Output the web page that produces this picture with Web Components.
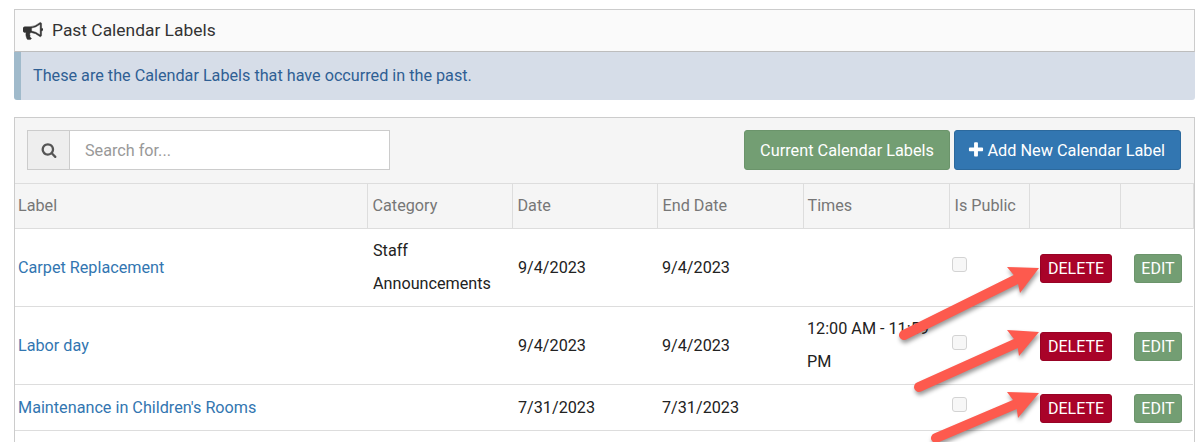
<!DOCTYPE html>
<html>
<head>
<meta charset="utf-8">
<title>Past Calendar Labels</title>
<style>
  html, body { margin: 0; height: 442px; overflow: hidden; background: #fff; }
  body { font-family: Roboto, "Liberation Sans", sans-serif; font-size: 16.2px; color: #222; }
</style>
</head>
<body>
<notice-panel title="Past Calendar Labels">These are the Calendar Labels that have occurred in the past.</notice-panel>
<labels-panel></labels-panel>
<arrow-overlay></arrow-overlay>

<script>
const BULLHORN = "M1664 640q53 0 90.5 37.5t37.5 90.5-37.5 90.5-90.5 37.5v384q0 52-38 90t-90 38q-417-347-812-380-58 19-91 66t-31 100.5 40 92.5q-20 33-23 65.5t6 58 33.5 55 48 50 61.5 50.5q-29 58-111.5 83t-168.5 11.5-132-55.5q-7-23-29.5-87.5t-32-94.5-23-89-15-101 3.5-98.5 22-110.5h-122q-66 0-113-47t-47-113v-192q0-66 47-113t113-47h480q435 0 896-384 52 0 90 38t38 90v384zm-128 604v-954q-394 302-768 343v270q377 42 768 341z";
const SEARCH = "M1216 832q0-185-131.5-316.5t-316.5-131.5-316.5 131.5-131.5 316.5 131.5 316.5 316.5 131.5 316.5-131.5 131.5-316.5zm512 832q0 52-38 90t-90 38q-54 0-90-38l-343-342q-179 124-399 124-143 0-273.5-55.5t-225-150-150-225-55.5-273.5 55.5-273.5 150-225 225-150 273.5-55.5 273.5 55.5 225 150 150 225 55.5 273.5q0 220-124 399l343 343q37 37 37 90z";
const PLUS = "M1600 736v192q0 40-28 68t-68 28h-416v416q0 40-28 68t-68 28h-192q-40 0-68-28t-28-68v-416h-416q-40 0-68-28t-28-68v-192q0-40 28-68t68-28h416v-416q0-40 28-68t68-28h192q40 0 68 28t28 68v416h416q40 0 68 28t28 68z";

// Heading plus the blue info strip
class NoticePanel extends HTMLElement {
  connectedCallback() {
    let title = this.getAttribute("title");
    this.removeAttribute("title");
    this._root = this.attachShadow({ mode: "open" });
    this._root.innerHTML = `
      <style>
        :host { display: block; margin: 9px 9px 0 14px; }
        .head {
          display: flex;
          align-items: center;
          gap: 9px;
          height: 41px;
          box-sizing: content-box;
          padding-left: 8px;
          background: #fafafa;
          border: 1px solid #ccc;
          border-bottom-color: #bdbdbd;
          color: #333;
          font-size: 17.4px;
        }
        .head span { margin-bottom: 1px; }
        .head svg { width: 20px; height: 20px; fill: #333; stroke: #333; stroke-width: 40; }
        .alert {
          height: 48px;
          box-sizing: border-box;
          display: flex;
          align-items: center;
          padding: 0 0 2px 12px;
          background: #d6dde8;
          border-left: 7px solid #a0bacb;
          border-radius: 0 0 3px 3px;
          color: #2f5f94;
        }
      </style>
      <div class="head">
        <svg viewBox="0 0 1792 1792"><path d="${BULLHORN}"/></svg>
        <span>${title}</span>
      </div>
      <div class="alert"><slot></slot></div>
    `;
  }
}

// Small coloured button, used in the toolbar and the rows
class ActionButton extends HTMLElement {
  connectedCallback() {
    this._root = this.attachShadow({ mode: "open" });
    this._root.innerHTML = `
      <style>
        :host {
          display: inline-flex;
          align-items: center;
          justify-content: center;
          box-sizing: border-box;
          border-radius: 3px;
          color: #fff;
          background: var(--bg);
          border: 1px solid var(--edge);
          white-space: nowrap;
        }
        :host([kind="green"]) { --bg: #739e73; --edge: #6b946b; }
        :host([kind="blue"]) { --bg: #3276b1; --edge: #2c699d; }
        :host([kind="red"]) { --bg: #a90329; --edge: #980325; }
        :host([size="big"]) { height: 40px; padding: 0 15px; font-size: 16.3px; }
        :host([size="small"]) { height: 29px; padding: 0 7px; font-size: 16px; }
      </style>
      <slot></slot>
    `;
  }
}

class SearchBox extends HTMLElement {
  connectedCallback() {
    this._root = this.attachShadow({ mode: "open" });
    this._root.innerHTML = `
      <style>
        :host { display: flex; width: 363px; height: 40px; box-sizing: border-box; border: 1px solid #ccc; }
        .addon {
          width: 41px;
          display: flex;
          align-items: center;
          justify-content: center;
          background: #eee;
          border-right: 1px solid #ccc;
        }
        .addon svg { width: 16px; height: 16px; fill: #555; }
        input {
          flex: 1;
          min-width: 0;
          border: 0;
          outline: 0;
          padding: 0 15px;
          background: #fff;
          font: inherit;
        }
        input::placeholder { color: #999; opacity: 1; }
      </style>
      <div class="addon"><svg viewBox="0 0 1792 1792"><path d="${SEARCH}"/></svg></div>
      <input placeholder="Search for...">
    `;
  }
}

class LabelsPanel extends HTMLElement {
  connectedCallback() {
    const rows = [
      { label: "Carpet Replacement", category: "Staff Announcements", date: "9/4/2023", end: "9/4/2023", times: "" },
      { label: "Labor day", category: "", date: "9/4/2023", end: "9/4/2023", times: "12:00 AM - 11:59 PM" },
      { label: "Maintenance in Children's Rooms", category: "", date: "7/31/2023", end: "7/31/2023", times: "", short: true },
    ];
    const body = rows.map((r) => `
      <tr class="${r.short ? "short" : ""}">
        <td><a>${r.label}</a></td>
        <td>${r.category}</td>
        <td>${r.date}</td>
        <td>${r.end}</td>
        <td>${r.times}</td>
        <td><span class="check"></span></td>
        <td class="act"><action-button kind="red" size="small">DELETE</action-button></td>
        <td class="act"><action-button kind="green" size="small">EDIT</action-button></td>
      </tr>`).join("");

    this._root = this.attachShadow({ mode: "open" });
    this._root.innerHTML = `
      <style>
        :host {
          display: block;
          margin: 17px 9px 0 14px;
          border: 1px solid #ccc;
          border-bottom: 0;
          box-sizing: border-box;
          height: 325px;
        }
        .toolbar {
          display: flex;
          align-items: center;
          height: 64px;
          padding: 0 13px 1px 12px;
          background: #f5f5f5;
          gap: 4px;
        }
        .spacer { flex: 1; }
        .plus { margin: 0 2px 0 -3px; }
        .toolbar action-button[kind="green"] { padding: 0 15.5px; }
        table { border-collapse: collapse; table-layout: fixed; width: 1178px; }
        th {
          height: 43px;
          padding: 0 4px 1px 5px;
          text-align: left;
          font-weight: 400;
          color: #777;
          background: #f5f5f5;
          border: 1px solid #ddd;
          border-left: 0;
        }
        td {
          padding: 5px 4px 6px 5px;
          line-height: 33px;
          border-bottom: 1px solid #ddd;
          color: #222;
          vertical-align: middle;
        }
        td:first-child, th:first-child { padding-left: 3px; }
        td:nth-child(2), td:nth-child(3) { padding-left: 6px; }
        td:nth-child(5) { padding-left: 4px; }
        th:nth-child(5) { padding-left: 4px; }
        th:last-child { border-right: 1px solid #ddd; }
        tr.short { height: 46px; }
        a { color: #3276b1; }
        .check {
          display: block;
          width: 13px;
          height: 13px;
          margin: 0 0 6px -2px;
          background: #f7f7f7;
          border: 1px solid #d3d3d3;
          border-radius: 3px;
        }
        .act { text-align: center; padding: 0 0 0 3px; }
        .act action-button { vertical-align: middle; }
        .act:last-child action-button { padding: 0 6px; }
      </style>
      <div class="toolbar">
        <search-box></search-box>
        <div class="spacer"></div>
        <action-button kind="green" size="big">Current Calendar Labels</action-button>
        <action-button kind="blue" size="big">
          <svg class="plus" viewBox="0 0 1792 1792" width="18" height="18" fill="#fff"><path d="${PLUS}"/></svg>
          Add New Calendar Label
        </action-button>
      </div>
      <table>
        <colgroup>
          <col style="width:352px"><col style="width:145px"><col style="width:145px"><col style="width:146px">
          <col style="width:146px"><col style="width:80px"><col style="width:91px"><col style="width:73px">
        </colgroup>
        <thead>
          <tr><th>Label</th><th>Category</th><th>Date</th><th>End Date</th><th>Times</th><th>Is Public</th><th></th><th></th></tr>
        </thead>
        <tbody>${body}</tbody>
      </table>
    `;
  }
}

// Red arrows drawn on top of the screenshot
class ArrowOverlay extends HTMLElement {
  connectedCallback() {
    const arrows = [
      { tail: [904, 335], tip: [1039, 268], b1: [1007, 267], notch: [1017, 279], b2: [1020, 293] },
      { tail: [919, 387], tip: [1039, 332], b1: [1007, 330], notch: [1017, 343], b2: [1019, 356] },
      { tail: [936, 438], tip: [1039, 393], b1: [1007, 392], notch: [1016, 404], b2: [1018, 418] },
    ];
    const shapes = arrows.map((a) => `
      <line x1="${a.tail[0]}" y1="${a.tail[1]}" x2="${a.notch[0]}" y2="${a.notch[1]}"/>
      <polygon points="${a.tip} ${a.b1} ${a.notch} ${a.b2}"/>`).join("");
    this._root = this.attachShadow({ mode: "open" });
    this._root.innerHTML = `
      <style>
        :host { position: absolute; left: 0; top: 0; width: 1204px; height: 442px; pointer-events: none; }
        svg { display: block; }
        g { filter: drop-shadow(1px 3px 2px rgba(0,0,0,.4)); }
        line { stroke: #fd5a4e; stroke-width: 10; stroke-linecap: round; }
        polygon { fill: #fd5a4e; }
      </style>
      <svg width="1204" height="442"><g>${shapes}</g></svg>
    `;
  }
}

customElements.define("notice-panel", NoticePanel);
customElements.define("action-button", ActionButton);
customElements.define("search-box", SearchBox);
customElements.define("labels-panel", LabelsPanel);
customElements.define("arrow-overlay", ArrowOverlay);
</script>
</body>
</html>
